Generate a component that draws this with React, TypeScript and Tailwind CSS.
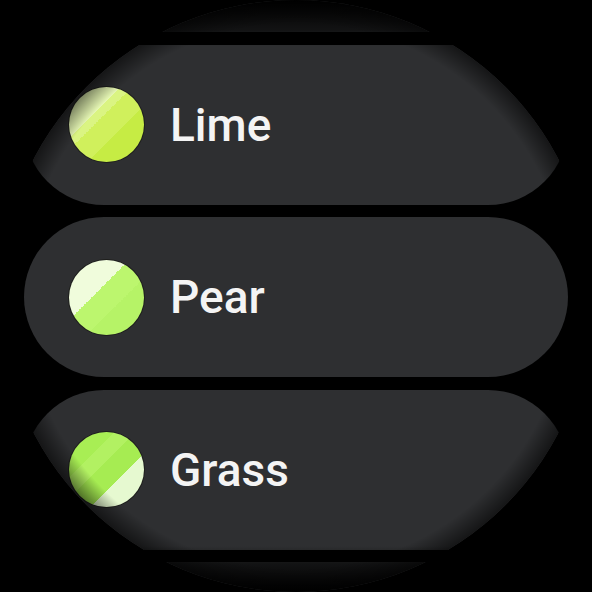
import React from "react";

interface Item {
  label: string;
  swatch: string;
}

const items: Item[] = [
  {
    label: "Lime",
    swatch:
      "bg-[linear-gradient(135deg,#e6f7b4_0%,#e6f7b4_34%,#daf482_34%,#daf482_42%,#d0f05c_42%,#d0f05c_62%,#c6ec44_62%,#c6ec44_100%)]",
  },
  {
    label: "Pear",
    swatch:
      "bg-[linear-gradient(135deg,#f0fcdc_0%,#f0fcdc_40%,#bcf66e_40%,#bcf66e_62%,#b6f367_62%,#b6f367_100%)]",
  },
  {
    label: "Grass",
    swatch:
      "bg-[linear-gradient(135deg,#a8ee54_0%,#a8ee54_30%,#b2f162_30%,#b2f162_44%,#a6ec52_44%,#a6ec52_64%,#e6f9d0_64%,#e6f9d0_100%)]",
  },
];

function Chip({ item }: { item: Item }) {
  return (
    <div className="h-[160px] shrink-0 rounded-full bg-[#2e2f31] flex items-center pl-[45px]">
      <div
        className={`w-[75px] h-[75px] rounded-full shrink-0 ring-1 ring-[#1e1f1c] ${item.swatch}`}
      />
      <span className="ml-[26px] font-['Roboto',sans-serif] font-medium text-[46px] leading-none text-[#f4f4f4]">
        {item.label}
      </span>
    </div>
  );
}

// chips scrolled mostly out of view, above and below
function EdgeChip() {
  return <div className="h-[160px] shrink-0 rounded-full bg-[#2e2f31]" />;
}

export default function App() {
  return (
    <div className="w-[592px] h-[592px] bg-black overflow-hidden">
      <div className="relative w-[592px] h-[592px] rounded-full overflow-hidden bg-black">
        <div className="flex flex-col gap-[12.5px] px-[24px] -mt-[128px]">
          <EdgeChip />
          {items.map((item) => (
            <Chip key={item.label} item={item} />
          ))}
          <EdgeChip />
        </div>
        {/* edge vignette */}
        <div className="absolute inset-0 pointer-events-none bg-[linear-gradient(to_bottom,rgba(0,0,0,1)_0px,rgba(0,0,0,0.6)_30px,rgba(0,0,0,0.2)_40px,transparent_46px,transparent_546px,rgba(0,0,0,0.2)_552px,rgba(0,0,0,0.6)_564px,rgba(0,0,0,1)_592px)]" />
        <div className="absolute inset-0 pointer-events-none rounded-full bg-[radial-gradient(circle_closest-side,transparent_92%,rgba(0,0,0,0.55)_100%)]" />
      </div>
    </div>
  );
}
